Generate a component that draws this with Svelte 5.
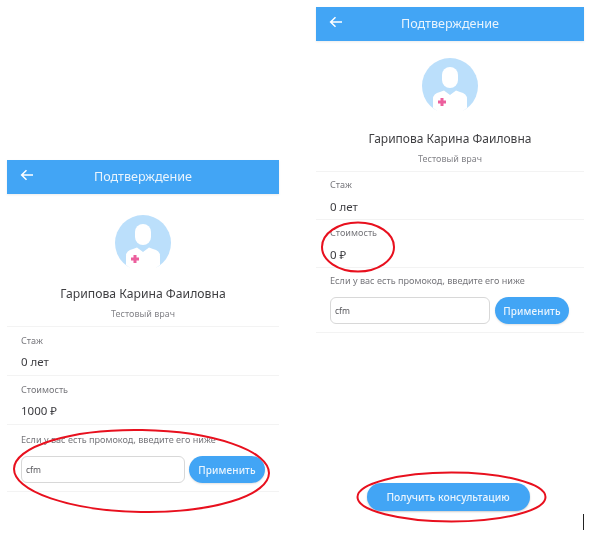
<script>
  const screens = [
    { side: "left", cost: "1000 ₽" },
    { side: "right", cost: "0 ₽", cta: "Получить консультацию" }
  ];
</script>

<div class="page">
  {#each screens as screen}
    <section class="phone {screen.side}">
      <header class="topbar">
        <svg class="back" viewBox="0 0 14 12" width="14" height="12" aria-hidden="true">
          <path d="M13 6H2M6.5 1.2 1.6 6l4.9 4.8" fill="none" stroke="#fff" stroke-width="1.5" />
        </svg>
        <span class="title">Подтверждение</span>
      </header>

      <div class="profile">
        <svg class="avatar" viewBox="0 0 56 56" width="56" height="56" aria-hidden="true">
          <circle cx="28" cy="28" r="28" fill="#bbdffb" />
          <rect x="20" y="9" width="16" height="21" rx="8" fill="#fff" />
          <path d="M11 50V41Q11 35.500 18 34L22 32.500 28 37 34 32.500 38 34Q45 35.500 45 41V50L37 56H19Z" fill="#fff" />
          <path d="M18.500 40h3v2.500H24v3h-2.500V48h-3v-2.500H16v-3h2.500Z" fill="#ec5f9d" />
        </svg>
        <div class="name">Гарипова Карина Фаиловна</div>
        <div class="role">Тестовый врач</div>
      </div>

      <div class="row">
        <div class="label">Стаж</div>
        <div class="value">0 лет</div>
      </div>
      <div class="row">
        <div class="label">Стоимость</div>
        <div class="value">{screen.cost}</div>
      </div>
      <div class="row promo">
        <div class="label">Если у вас есть промокод, введите его ниже</div>
        <div class="promo-form">
          <div class="input">cfm</div>
          <button class="apply">Применить</button>
        </div>
      </div>

      {#if screen.cta}
        <button class="cta">{screen.cta}</button>
      {/if}
    </section>
  {/each}

  <!-- red marker circles drawn over the screenshots -->
  <svg class="marks" viewBox="0 0 590 554" width="590" height="554" aria-hidden="true">
    <ellipse cx="141.500" cy="471" rx="127.500" ry="41" transform="rotate(1 141.500 471)" />
    <ellipse cx="358" cy="247" rx="36" ry="24.500" />
    <ellipse cx="451.500" cy="497" rx="94" ry="24.500" />
  </svg>
  <div class="caret"></div>
</div>

<style>
  :global(body) {
    background: #fff;
  }

  .page {
    position: relative;
    width: 590px;
    height: 554px;
    overflow: hidden;
    box-sizing: border-box;
    padding: 7px 0 0 7px;
    display: flex;
    align-items: flex-start;
    gap: 37px;
    background: #fff;
    color: #3c3c40;
    font-family: "Noto Sans", "Open Sans", sans-serif;
    filter: blur(0.35px);
  }

  .phone {
    display: flex;
    flex-direction: column;
    background: #fff;
  }

  .phone.left {
    width: 272px;
    margin-top: 153px;
  }

  .phone.right {
    width: 268px;
  }

  .topbar {
    height: 34px;
    box-sizing: border-box;
    padding-bottom: 2px;
    display: flex;
    align-items: center;
    position: relative;
    justify-content: center;
    background: #42a5f5;
    box-shadow: 0 1px 2px rgba(0, 0, 0, 0.08);
  }

  .back {
    position: absolute;
    left: 13px;
    top: 9px;
  }

  .title {
    color: #e9f4fd;
    font-size: 12.600px;
  }

  .profile {
    display: flex;
    flex-direction: column;
    align-items: center;
    border-bottom: 1px solid #f3f3f3;
    padding-bottom: 5px;
  }

  .left .profile {
    padding-top: 21px;
  }

  .right .profile {
    padding-top: 17px;
  }

  .name {
    margin-top: 14px;
    font-size: 12.200px;
    line-height: 18px;
    color: #3f3f42;
  }

  .right .name {
    margin-top: 16px;
    font-size: 12px;
  }

  .role {
    margin-top: 4px;
    font-size: 9px;
    line-height: 14px;
    color: #85858a;
  }

  .row {
    padding: 7px 14px 6px;
    border-bottom: 1px solid #f3f3f3;
  }

  .right .row {
    padding: 6px 14px 5px;
  }

  .label {
    font-size: 9.100px;
    line-height: 14px;
    color: #77777c;
  }

  .value {
    margin-top: 7px;
    font-size: 11.500px;
    line-height: 14px;
    color: #3c3c40;
  }

  .right .value {
    margin-top: 8px;
  }

  .row.promo {
    padding-top: 8px;
    padding-bottom: 8px;
  }

  .right .row.promo {
    padding-top: 6px;
  }

  .promo-form {
    display: flex;
    align-items: center;
    gap: 4px;
    margin-top: 9px;
  }

  .right .promo-form {
    gap: 5px;
    margin-right: 1px;
  }

  .input {
    flex: 1;
    height: 27px;
    box-sizing: border-box;
    border: 1px solid #d8d8d8;
    border-radius: 6px;
    padding: 0 4px;
    font-size: 8.500px;
    line-height: 25px;
    color: #55555a;
  }

  button {
    border: 0;
    font-family: inherit;
    color: #eaf5fe;
    background: #42a5f5;
  }

  .apply {
    width: 76px;
    height: 27px;
    padding: 0;
    border-radius: 14px;
    font-size: 10px;
    font-weight: 500;
    letter-spacing: 0.1px;
    box-shadow: 0 1px 2px rgba(0, 0, 0, 0.12);
  }

  .right .apply {
    width: 74px;
  }

  .cta {
    align-self: center;
    width: 163px;
    height: 28px;
    margin-top: 150px;
    margin-left: -4px;
    padding: 0;
    border-radius: 14px;
    font-size: 10.300px;
    font-weight: 500;
    box-shadow: 0 1px 2px rgba(0, 0, 0, 0.2);
  }

  .marks {
    position: absolute;
    left: 0;
    top: 0;
  }

  .marks ellipse {
    fill: none;
    stroke: #e8101e;
    stroke-width: 2;
  }

  .caret {
    position: absolute;
    left: 583px;
    top: 514px;
    width: 1px;
    height: 16px;
    background: #222;
  }
</style>
